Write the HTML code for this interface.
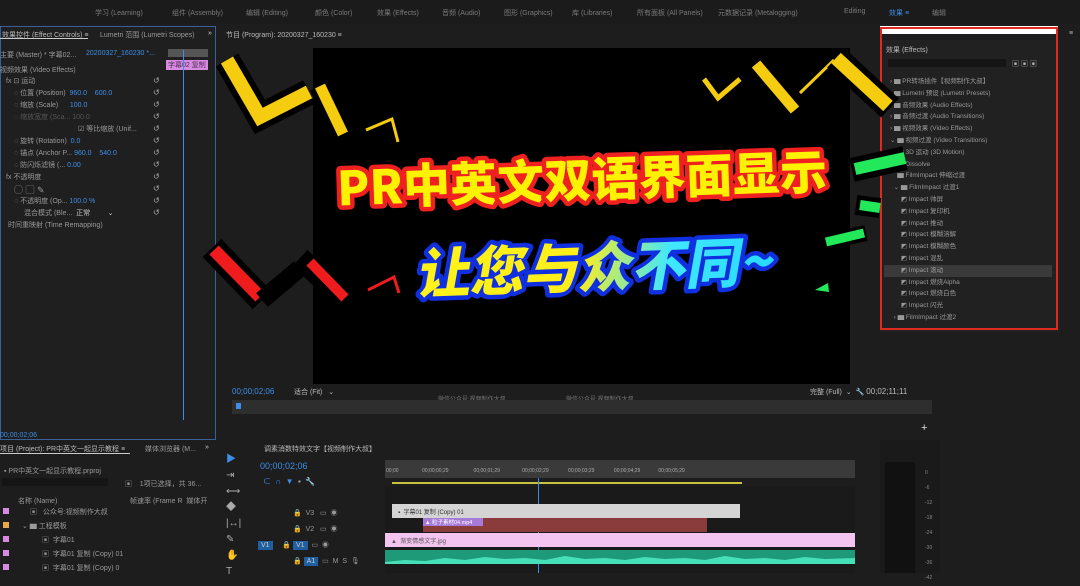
<!DOCTYPE html>
<html><head><meta charset="utf-8"><style>
*{margin:0;padding:0;box-sizing:border-box}
body{width:1080px;height:573px;overflow:hidden;background:#1d1d1d;font-family:"Liberation Sans","Noto Sans CJK SC",sans-serif;color:#9a9a9a;font-size:7px;position:relative}
.a{position:absolute;white-space:nowrap}
.p{position:absolute;background:#232323}
.blue{color:#3d8ee8}
</style></head><body>
<div class="a" style="left:0;top:0;width:1080px;height:24px;background:#1b1b1b"></div>
<div class="a" style="top:8px;left:95px;color:#7a7a7a">学习 (Learning)</div>
<div class="a" style="top:8px;left:172px;color:#7a7a7a">组件 (Assembly)</div>
<div class="a" style="top:8px;left:246px;color:#7a7a7a">编辑 (Editing)</div>
<div class="a" style="top:8px;left:315px;color:#7a7a7a">颜色 (Color)</div>
<div class="a" style="top:8px;left:377px;color:#7a7a7a">效果 (Effects)</div>
<div class="a" style="top:8px;left:442px;color:#7a7a7a">音频 (Audio)</div>
<div class="a" style="top:8px;left:504px;color:#7a7a7a">图形 (Graphics)</div>
<div class="a" style="top:8px;left:572px;color:#7a7a7a">库 (Libraries)</div>
<div class="a" style="top:8px;left:637px;color:#7a7a7a">所有面板 (All Panels)</div>
<div class="a" style="top:8px;left:718px;color:#7a7a7a">元数据记录 (Metalogging)</div>
<div class="a" style="top:8px;left:844px;color:#7a7a7a">Editing</div>
<div class="a" style="top:8px;left:889px;color:#3d8ee8">效果 ≡</div>
<div class="a" style="top:8px;left:932px;color:#7a7a7a">编辑</div>

<div class="p" style="left:0;top:26px;width:216px;height:414px;border:1px solid #3a5f9a;background:#1f1f1f"></div>
<div class="a" style="left:2px;top:30px;color:#bbb">效果控件 (Effect Controls) ≡</div>
<div class="a" style="left:0;top:38px;width:88px;height:1px;background:#ccc"></div>
<div class="a" style="left:100px;top:30px">Lumetri 范围 (Lumetri Scopes)</div>
<div class="a" style="left:208px;top:30px;color:#ccc">»</div>
<div class="a" style="left:0;top:50px">主要 (Master) * 字幕02...</div>
<div class="a blue" style="left:86px;top:50px">20200327_160230 *...</div>
<div class="a" style="left:168px;top:49px;width:40px;height:8px;background:#555"></div>
<div class="a" style="left:166px;top:60px;width:42px;height:10px;background:#d88ae0;color:#503058;padding-left:2px">字幕02 复制</div>
<div class="a" style="left:183px;top:50px;width:1px;height:370px;background:#3d8ee8"></div>
<div class="a" style="left:0;top:65px">视频效果 (Video Effects)</div>
<div class="a" style="left:6px;top:76px">fx ⊡ 运动</div>
<div class="a" style="left:14px;top:88px">◌ 位置 (Position) <span class="blue">&nbsp;960.0 &nbsp;&nbsp;&nbsp;600.0</span></div>
<div class="a" style="left:14px;top:100px">◌ 缩放 (Scale) <span class="blue">&nbsp;&nbsp;&nbsp;&nbsp;&nbsp;100.0</span></div>
<div class="a" style="left:14px;top:112px;color:#555">◌ 缩放宽度 (Sca... 100.0</div>
<div class="a" style="left:78px;top:124px">☑ 等比缩放 (Unif...</div>
<div class="a" style="left:14px;top:136px">◌ 旋转 (Rotation) <span class="blue">&nbsp;0.0</span></div>
<div class="a" style="left:14px;top:148px">◌ 锚点 (Anchor P... <span class="blue">960.0 &nbsp;&nbsp;&nbsp;540.0</span></div>
<div class="a" style="left:14px;top:160px">◌ 防闪烁滤镜 (... <span class="blue">0.00</span></div>
<div class="a" style="left:6px;top:172px">fx 不透明度</div>
<div class="a" style="left:14px;top:183px;font-size:9px">◯ ▢ ✎</div>
<div class="a" style="left:14px;top:196px">◌ 不透明度 (Op... <span class="blue">100.0 %</span></div>
<div class="a" style="left:24px;top:208px">混合模式 (Ble... <span style="color:#ccc">&nbsp;正常 &nbsp;&nbsp;&nbsp;&nbsp;&nbsp;&nbsp;&nbsp;&nbsp;⌄</span></div>
<div class="a" style="left:8px;top:220px">时间重映射 (Time Remapping)</div>
<div class="a" style="left:153px;top:75px;line-height:12px;color:#aaa;font-size:8px">↺<br>↺<br>↺<br>↺<br>↺<br>↺<br>↺<br>↺<br>↺<br>↺<br>↺<br>↺</div>
<div class="a blue" style="left:0;top:432px">00;00;02;06</div>

<div class="a" style="left:226px;top:30px;color:#bbb">节目 (Program): 20200327_160230 ≡</div>
<div class="a" style="left:313px;top:48px;width:537px;height:336px;background:#000"></div>
<div class="a blue" style="left:232px;top:387px;font-size:8px">00;00;02;06</div>
<div class="a" style="left:294px;top:387px;color:#bbb">适合 (Fit) &nbsp;&nbsp;⌄</div>
<div class="a" style="left:438px;top:394px;color:#777;font-size:6px">微信公众号:视频制作大叔</div>
<div class="a" style="left:566px;top:394px;color:#777;font-size:6px">微信公众号:视频制作大叔</div>
<div class="a" style="left:810px;top:387px;color:#bbb">完整 (Full) &nbsp;⌄ &nbsp;🔧 <span style="font-size:8px">00;02;11;11</span></div>
<div class="a" style="left:232px;top:400px;width:700px;height:14px;background:#2e2e2e"></div>
<div class="a" style="left:236px;top:403px;width:5px;height:6px;background:#3d8ee8"></div>
<div class="a" style="left:921px;top:422px;color:#ddd;font-size:11px">+</div>

<div class="p" style="left:880px;top:40px;width:180px;height:292px;background:#212121"></div>
<div class="a" style="left:880px;top:26px;width:178px;height:8px;background:#fff"></div>
<div class="a" style="left:880px;top:27px;width:178px;height:303px;border:2.5px solid #e02a20"></div>
<div class="a" style="left:886px;top:45px;color:#bbb">效果 (Effects)</div>
<div class="a" style="left:888px;top:59px;width:118px;height:8px;background:#151515"></div>
<div class="a" style="left:1012px;top:59px;color:#bbb">▣ ▣ ▣</div>
<div class="a" style="left:1069px;top:30px;color:#bbb">≡</div>
<div class="a" style="left:890px;top:76px;line-height:11.8px;font-size:6.5px;color:#999">
<div>› ▆ PR转场插件【视频制作大叔】</div>
<div>› ▆ Lumetri 预设 (Lumetri Presets)</div>
<div>› ▆ 音频效果 (Audio Effects)</div>
<div>› ▆ 音频过渡 (Audio Transitions)</div>
<div>› ▆ 视频效果 (Video Effects)</div>
<div>⌄ ▆ 视频过渡 (Video Transitions)</div>
<div>&nbsp;&nbsp;&nbsp;&nbsp;▆ 3D 运动 (3D Motion)</div>
<div>&nbsp;&nbsp;&nbsp;&nbsp;▆ Dissolve</div>
<div>&nbsp;&nbsp;&nbsp;&nbsp;▆ FilmImpact 伸缩过渡</div>
<div>&nbsp;&nbsp;⌄ ▆ FilmImpact 过渡1</div>
<div>&nbsp;&nbsp;&nbsp;&nbsp;&nbsp;&nbsp;◩ Impact 帅屏</div>
<div>&nbsp;&nbsp;&nbsp;&nbsp;&nbsp;&nbsp;◩ Impact 复印机</div>
<div>&nbsp;&nbsp;&nbsp;&nbsp;&nbsp;&nbsp;◩ Impact 推动</div>
<div>&nbsp;&nbsp;&nbsp;&nbsp;&nbsp;&nbsp;◩ Impact 模糊溶解</div>
<div>&nbsp;&nbsp;&nbsp;&nbsp;&nbsp;&nbsp;◩ Impact 模糊颜色</div>
<div>&nbsp;&nbsp;&nbsp;&nbsp;&nbsp;&nbsp;◩ Impact 混乱</div>
<div style="background:#3a3a3a;margin-left:-6px;padding-left:6px;width:168px">&nbsp;&nbsp;&nbsp;&nbsp;&nbsp;&nbsp;◩ Impact 滚动</div>
<div>&nbsp;&nbsp;&nbsp;&nbsp;&nbsp;&nbsp;◩ Impact 燃烧Alpha</div>
<div>&nbsp;&nbsp;&nbsp;&nbsp;&nbsp;&nbsp;◩ Impact 燃烧白色</div>
<div>&nbsp;&nbsp;&nbsp;&nbsp;&nbsp;&nbsp;◩ Impact 闪光</div>
<div>&nbsp;&nbsp;› ▆ FilmImpact 过渡2</div>
</div>

<div class="a" style="left:0;top:444px;color:#bbb">项目 (Project): PR中英文一起显示教程 ≡</div>
<div class="a" style="left:0;top:453px;width:130px;height:1px;background:#ccc"></div>
<div class="a" style="left:145px;top:444px">媒体浏览器 (M...</div>
<div class="a" style="left:205px;top:444px;color:#ccc">»</div>
<div class="a" style="left:4px;top:466px">▪ PR中英文一起显示教程.prproj</div>
<div class="a" style="left:2px;top:478px;width:106px;height:8px;background:#151515"></div>
<div class="a" style="left:125px;top:479px">▣ &nbsp;&nbsp;&nbsp;1项已选择，共 36...</div>
<div class="a" style="left:18px;top:496px">名称 (Name)</div>
<div class="a" style="left:130px;top:496px">帧速率 (Frame R &nbsp;媒体开</div>
<div class="a" style="left:3px;top:508px;width:6px;height:6px;background:#d88ae0"></div>
<div class="a" style="left:3px;top:522px;width:6px;height:6px;background:#e8a94a"></div>
<div class="a" style="left:3px;top:536px;width:6px;height:6px;background:#d88ae0"></div>
<div class="a" style="left:3px;top:550px;width:6px;height:6px;background:#d88ae0"></div>
<div class="a" style="left:3px;top:564px;width:6px;height:6px;background:#d88ae0"></div>
<div class="a" style="left:30px;top:507px">▣ &nbsp;&nbsp;公众号:视频制作大叔</div>
<div class="a" style="left:22px;top:521px">⌄ ▆ 工程模板</div>
<div class="a" style="left:42px;top:535px">▣ &nbsp;字幕01</div>
<div class="a" style="left:42px;top:549px">▣ &nbsp;字幕01 复制 (Copy) 01</div>
<div class="a" style="left:42px;top:563px">▣ &nbsp;字幕01 复制 (Copy) 0</div>

<div class="a" style="left:226px;top:452px;line-height:16px;font-size:10px;color:#aaa">
<div style="color:#3d8ee8">▶</div><div>⇥</div><div>⟷</div><div>◆</div><div>|↔|</div><div>✎</div><div>✋</div><div>T</div></div>

<div class="a" style="left:264px;top:444px;color:#bbb">调素消数特效文字【视频制作大叔】</div>
<div class="a blue" style="left:260px;top:461px;font-size:9px">00;00;02;06</div>
<div class="a blue" style="left:263px;top:476px;font-size:8px">⊂ &nbsp;∩ &nbsp;▼ &nbsp;<span style="color:#aaa">▪ &nbsp;🔧</span></div>
<div class="a" style="left:385px;top:460px;width:470px;height:18px;background:#3a3a3a"></div>
<div class="a" style="left:386px;top:468px;font-size:5px;color:#aaa">00;00 &nbsp;&nbsp;&nbsp;&nbsp;&nbsp;&nbsp;&nbsp;&nbsp;&nbsp;&nbsp;&nbsp;&nbsp;&nbsp;&nbsp;&nbsp;&nbsp;00;00;00;29 &nbsp;&nbsp;&nbsp;&nbsp;&nbsp;&nbsp;&nbsp;&nbsp;&nbsp;&nbsp;&nbsp;&nbsp;&nbsp;&nbsp;&nbsp;&nbsp;&nbsp;00;00;01;29 &nbsp;&nbsp;&nbsp;&nbsp;&nbsp;&nbsp;&nbsp;&nbsp;&nbsp;&nbsp;&nbsp;&nbsp;&nbsp;&nbsp;&nbsp;00;00;02;29 &nbsp;&nbsp;&nbsp;&nbsp;&nbsp;&nbsp;&nbsp;&nbsp;&nbsp;&nbsp;&nbsp;&nbsp;&nbsp;00;00;03;29 &nbsp;&nbsp;&nbsp;&nbsp;&nbsp;&nbsp;&nbsp;&nbsp;&nbsp;&nbsp;&nbsp;&nbsp;&nbsp;00;00;04;29 &nbsp;&nbsp;&nbsp;&nbsp;&nbsp;&nbsp;&nbsp;&nbsp;&nbsp;&nbsp;&nbsp;&nbsp;00;00;05;29</div>
<div class="a" style="left:392px;top:482px;width:350px;height:2px;background:#c8c040"></div>
<div class="a" style="left:385px;top:486px;width:470px;height:87px;background:#1a1a1a"></div>
<div class="a" style="left:538px;top:478px;width:1px;height:95px;background:#3d8ee8"></div>
<div class="a" style="left:392px;top:504px;width:348px;height:14px;background:#d4d4d4;color:#333;font-size:6px;padding:3px 6px">▪ &nbsp;字幕01 复制 (Copy) 01</div>
<div class="a" style="left:423px;top:518px;width:284px;height:14px;background:#8a3b3b"></div>
<div class="a" style="left:423px;top:518px;width:60px;height:8px;background:#a77ad8;color:#fff;font-size:5.5px;padding-left:2px">▲ 粒子素材04.mp4</div>
<div class="a" style="left:385px;top:533px;width:470px;height:14px;background:#f4c4f0;color:#555;font-size:6px;padding:3px 6px">▲ &nbsp;渐变情感文字.jpg</div>
<div class="a" style="left:385px;top:550px;width:470px;height:14px;background:#1e9a78"></div>
<svg class="a" style="left:385px;top:550px" width="470" height="14"><path d="M0 12 L20 10 L40 11 L60 8 L80 10 L100 7 L120 9 L140 8 L160 10 L180 6 L200 9 L220 8 L240 10 L260 7 L280 9 L300 8 L320 10 L340 6 L360 9 L380 8 L400 10 L420 7 L440 9 L470 8 L470 14 L0 14Z" fill="#46e0b8"/></svg>
<div class="a" style="left:258px;top:506px;line-height:16px;font-size:7px;color:#999">
<div>&nbsp;&nbsp;&nbsp;&nbsp;&nbsp;&nbsp;&nbsp;&nbsp;&nbsp;&nbsp;&nbsp;&nbsp;&nbsp;&nbsp;&nbsp;&nbsp;&nbsp;&nbsp;🔒 &nbsp;V3 &nbsp;&nbsp;▭ &nbsp;◉</div>
<div>&nbsp;&nbsp;&nbsp;&nbsp;&nbsp;&nbsp;&nbsp;&nbsp;&nbsp;&nbsp;&nbsp;&nbsp;&nbsp;&nbsp;&nbsp;&nbsp;&nbsp;&nbsp;🔒 &nbsp;V2 &nbsp;&nbsp;▭ &nbsp;◉</div>
<div><span style="background:#1f5f9f;color:#ccc;padding:1px 3px">V1</span> &nbsp;&nbsp;&nbsp;&nbsp;🔒 <span style="background:#1f5f9f;color:#ccc;padding:1px 3px">V1</span> &nbsp;▭ &nbsp;◉</div>
<div>&nbsp;&nbsp;&nbsp;&nbsp;&nbsp;&nbsp;&nbsp;&nbsp;&nbsp;&nbsp;&nbsp;&nbsp;&nbsp;&nbsp;&nbsp;&nbsp;&nbsp;&nbsp;🔒 <span style="background:#1f5f9f;color:#ccc;padding:1px 3px">A1</span> &nbsp;▭ &nbsp;M &nbsp;S &nbsp;🎙</div>
</div>
<div class="a" style="left:880px;top:440px;width:60px;height:133px;background:#1a1a1a"></div>
<div class="a" style="left:885px;top:462px;width:30px;height:111px;background:#111"></div>
<div class="a" style="left:925px;top:466px;font-size:5px;line-height:15px;color:#888">0<br>-6<br>-12<br>-18<br>-24<br>-30<br>-36<br>-42</div>

<svg class="a" style="left:0;top:0" width="1080" height="573">
<g stroke-linecap="butt" stroke-linejoin="miter" fill="none">
<polyline points="227,60 260,117 309,92" stroke="#000" stroke-width="26"/>
<polyline points="227,60 260,117 309,92" stroke="#f6cc10" stroke-width="14"/>
<line x1="320" y1="86" x2="343" y2="134" stroke="#000" stroke-width="22"/>
<line x1="320" y1="86" x2="343" y2="134" stroke="#f6cc10" stroke-width="11"/>
<polyline points="366,130 392,119 398,142" stroke="#f6cc10" stroke-width="3"/>
<polyline points="704,79 718,98 740,79" stroke="#f6cc10" stroke-width="5"/>
<line x1="756" y1="64" x2="795" y2="110" stroke="#000" stroke-width="20"/>
<line x1="756" y1="64" x2="795" y2="110" stroke="#f6cc10" stroke-width="11"/>
<line x1="800" y1="93" x2="834" y2="60" stroke="#f6cc10" stroke-width="3"/>
<line x1="836" y1="58" x2="890" y2="108" stroke="#000" stroke-width="26"/>
<line x1="836" y1="58" x2="888" y2="106" stroke="#f6cc10" stroke-width="14"/>
<line x1="852" y1="170" x2="905" y2="158" stroke="#000" stroke-width="24"/>
<line x1="855" y1="169" x2="905" y2="158" stroke="#22e85a" stroke-width="12"/>
<line x1="856" y1="205" x2="880" y2="208" stroke="#000" stroke-width="20"/>
<line x1="860" y1="205" x2="880" y2="208" stroke="#22e85a" stroke-width="10"/>
<line x1="824" y1="242" x2="866" y2="233" stroke="#000" stroke-width="16"/>
<line x1="826" y1="242" x2="864" y2="233" stroke="#22e85a" stroke-width="9"/>
<polygon points="815,290 828,283 829,292" fill="#22e85a"/>
<line x1="212" y1="248" x2="262" y2="300" stroke="#000" stroke-width="26"/>
<line x1="214" y1="250" x2="260" y2="297" stroke="#ee1c1c" stroke-width="13"/>
<line x1="262" y1="300" x2="300" y2="268" stroke="#000" stroke-width="18"/>
<line x1="300" y1="258" x2="347" y2="302" stroke="#000" stroke-width="22"/>
<line x1="310" y1="262" x2="345" y2="298" stroke="#ee1c1c" stroke-width="10"/>
<polyline points="368,290 394,277 399,293" stroke="#ee1c1c" stroke-width="3"/>
</g>
<defs><linearGradient id="g" x1="0" x2="1" y1="0" y2="0"><stop offset="0" stop-color="#fff21a"/><stop offset="0.45" stop-color="#ffee1a"/><stop offset="0.7" stop-color="#40e8ff"/><stop offset="1" stop-color="#28d8ff"/></linearGradient></defs>
<text x="582" y="197" text-anchor="middle" transform="rotate(-2 582 178)" font-family="Noto Sans CJK SC, sans-serif" font-weight="900" font-size="47" textLength="490" fill="#fff200" stroke="#ee2020" stroke-width="9" paint-order="stroke" stroke-linejoin="round">PR中英文双语界面显示</text>
<text x="598" y="287" text-anchor="middle" transform="rotate(-2 598 262) skewX(-12)" font-family="Noto Sans CJK SC, sans-serif" font-weight="900" font-size="54" fill="url(#g)" stroke="#1030e0" stroke-width="9" paint-order="stroke" stroke-linejoin="round" dx="56">让您与众不同~</text>
</svg>
</body></html>
